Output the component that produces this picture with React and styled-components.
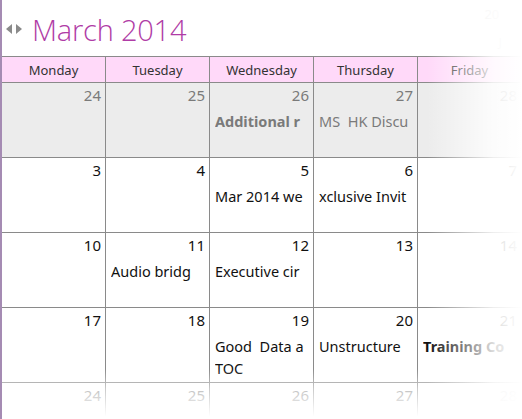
import React from 'react';
import styled, { createGlobalStyle } from 'styled-components';

const Global = createGlobalStyle`
    html, body {
        margin: 0;
        padding: 0;
        background: #fff;
        overflow: hidden;
    }
    body {
        font-family: "Noto Sans", "Open Sans", sans-serif;
    }
`

const Page = styled.div`
    position: relative;
    width: 522px;
    height: 419px;
    overflow: hidden;
    border-left: 2px solid #a58bb3;
    box-sizing: border-box;
    display: flex;
    flex-direction: column;
`

const TopBar = styled.div`
    height: 56px;
    display: flex;
    align-items: flex-start;
    flex-shrink: 0;
`

const Arrows = styled.div`
    display: flex;
    gap: 4px;
    margin: 24px 0 0 4px;
`

const Arrow = styled.span`
    width: 0;
    height: 0;
    border-top: 5px solid transparent;
    border-bottom: 5px solid transparent;
    ${p => p.dir === 'left' ? 'border-right: 6px solid #8a8a8a;' : 'border-left: 6px solid #8a8a8a;'}
`

const Title = styled.h1`
    margin: 10px 0 0 10px;
    font-family: "Open Sans", "Noto Sans", sans-serif;
    font-weight: 300;
    font-size: 29px;
    line-height: 40px;
    color: #b03ca6;
    letter-spacing: -0.2px;
`

const SidePeek = styled.div`
    margin-left: auto;
    margin-right: 20px;
    display: flex;
    flex-direction: column;
    align-items: flex-start;
    font-size: 13px;
    color: #e4e4e4;
    line-height: 16px;
    padding-top: 6px;
    gap: 12px;
`

const PeekJ = styled.span`
    padding-left: 14px;
`

const Grid = styled.div`
    display: grid;
    grid-template-columns: repeat(5, 103px);
    grid-template-rows: 25px repeat(5, 74px);
    gap: 1px;
    background: #8a8a8a;
    border-top: 1px solid #8a8a8a;
    width: max-content;
`

const DayHead = styled.div`
    background: #ffd9f9;
    display: flex;
    align-items: center;
    justify-content: center;
    font-size: 13px;
    color: #333;
`

const Cell = styled.div`
    background: ${p => p.other ? '#ececec' : '#fff'};
    padding: 1px 4px 0 4px;
    overflow: hidden;
    display: flex;
    flex-direction: column;
`

const DateNum = styled.div`
    text-align: right;
    font-size: 15px;
    line-height: 22px;
    color: ${p => p.dim ? '#7a7a7a' : '#111'};
`

const Events = styled.div`
    margin-top: 4px;
    padding-left: 1px;
`

const Event = styled.div`
    font-size: 14.5px;
    line-height: 22px;
    white-space: pre;
    overflow: hidden;
    color: ${p => p.dim ? '#7a7a7a' : '#111'};
    font-weight: ${p => p.bold ? 700 : 400};
`

const FadeRight = styled.div`
    position: absolute;
    top: 0;
    right: 0;
    width: 95px;
    height: 100%;
    background: linear-gradient(to right, rgba(255,255,255,0), rgba(255,255,255,0.85) 70%, #fff);
    pointer-events: none;
`

const FadeBottom = styled.div`
    position: absolute;
    left: -2px;
    right: 0;
    bottom: 0;
    height: 50px;
    background: linear-gradient(to bottom, rgba(255,255,255,0), rgba(255,255,255,0.55) 40%, #fff 95%);
    pointer-events: none;
`

const days = ['Monday', 'Tuesday', 'Wednesday', 'Thursday', 'Friday'];

const weeks = [
    [
        { d: 24, other: true },
        { d: 25, other: true },
        { d: 26, other: true, ev: [{ t: 'Additional r', bold: true, dim: true }] },
        { d: 27, other: true, ev: [{ t: 'MS  HK Discu', dim: true }] },
        { d: 28, other: true },
    ],
    [
        { d: 3 },
        { d: 4 },
        { d: 5, ev: [{ t: 'Mar 2014 we' }] },
        { d: 6, ev: [{ t: 'xclusive Invit' }] },
        { d: 7 },
    ],
    [
        { d: 10 },
        { d: 11, ev: [{ t: 'Audio bridg' }] },
        { d: 12, ev: [{ t: 'Executive cir' }] },
        { d: 13 },
        { d: 14 },
    ],
    [
        { d: 17 },
        { d: 18 },
        { d: 19, ev: [{ t: 'Good  Data a' }, { t: 'TOC' }] },
        { d: 20, ev: [{ t: 'Unstructure' }] },
        { d: 21, ev: [{ t: 'Training Co', bold: true }] },
    ],
    [
        { d: 24, dim: true },
        { d: 25, dim: true },
        { d: 26, dim: true },
        { d: 27, dim: true },
        { d: 28, dim: true },
    ],
];

function App() {
    return (
        <Page>
            <Global />
            <TopBar>
                <Arrows>
                    <Arrow dir="left" />
                    <Arrow dir="right" />
                </Arrows>
                <Title>March 2014</Title>
                <SidePeek>
                    <span>20</span>
                    <PeekJ>J</PeekJ>
                </SidePeek>
            </TopBar>
            <Grid>
                {days.map(d => <DayHead key={d}>{d}</DayHead>)}
                {weeks.map((w, wi) => w.map((c, ci) => (
                    <Cell key={wi + '-' + ci} other={c.other}>
                        <DateNum dim={c.other || c.dim}>{c.d}</DateNum>
                        {c.ev && (
                            <Events>
                                {c.ev.map((e, i) => (
                                    <Event key={i} bold={e.bold} dim={e.dim}>{e.t}</Event>
                                ))}
                            </Events>
                        )}
                    </Cell>
                )))}
            </Grid>
            <FadeRight />
            <FadeBottom />
        </Page>
    );
}

export default App;
